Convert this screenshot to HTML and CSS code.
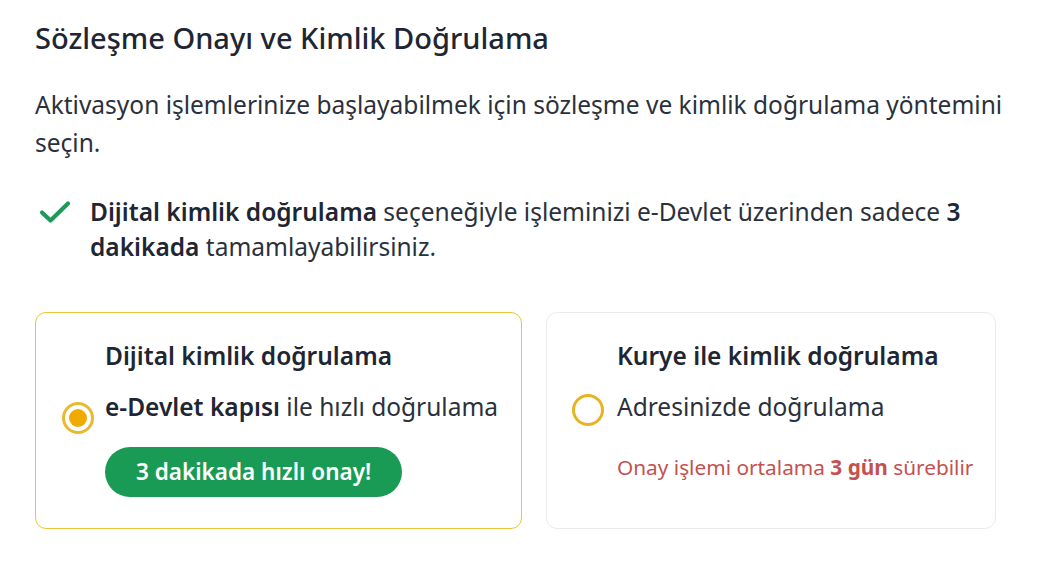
FILE: index.html
```html
<!DOCTYPE html>
<html lang="tr">
<head>
<meta charset="utf-8">
<link rel="stylesheet" href="styles.css">
</head>
<body>
<div class="page">
  <h1 class="title">Sözleşme Onayı ve Kimlik Doğrulama</h1>
  <p class="intro">Aktivasyon işlemlerinize başlayabilmek için sözleşme ve kimlik doğrulama yöntemini seçin.</p>
  <div class="note">
    <svg class="check" viewBox="0 0 32 24" width="32" height="24"><path d="M3 12.5 L11.5 20.5 L29 3.5" fill="none" stroke="#1e9a58" stroke-width="4.2" stroke-linecap="round" stroke-linejoin="round"/></svg>
    <p class="note-text"><strong>Dijital kimlik doğrulama</strong> seçeneğiyle işleminizi e-Devlet üzerinden sadece <strong>3 dakikada</strong> tamamlayabilirsiniz.</p>
  </div>
  <div class="cards">
    <div class="card card-selected">
      <div class="card-row">
        <span class="radio radio-on"><span class="dot"></span></span>
        <div class="card-body">
          <div class="card-title">Dijital kimlik doğrulama</div>
          <div class="card-sub"><strong>e-Devlet kapısı</strong> ile hızlı doğrulama</div>
          <span class="pill">3 dakikada hızlı onay!</span>
        </div>
      </div>
    </div>
    <div class="card card-plain">
      <div class="card-row">
        <span class="radio"></span>
        <div class="card-body">
          <div class="card-title">Kurye ile kimlik doğrulama</div>
          <div class="card-sub">Adresinizde doğrulama</div>
          <div class="warn">Onay işlemi ortalama <strong>3 gün</strong> sürebilir</div>
        </div>
      </div>
    </div>
  </div>
</div>
</body>
</html>
```
FILE: styles.css
```css
html, body { margin: 0; padding: 0; background: #fff; }
body { font-family: "Noto Sans", "Open Sans", sans-serif; color: #222a36; }
.page { padding: 19px 0 0 35px; width: 990px; }
.title { margin: 0; font-size: 29px; font-weight: 500; line-height: 38px; color: #1f2633; }
.intro { margin: 29px 0 0; font-size: 24.5px; line-height: 38px; color: #2a313c; }
.note { display: flex; align-items: flex-start; gap: 19px; margin-top: 32px; }
.check { flex: none; margin: 6px 0 0 4px; }
.note-text { margin: 0; font-size: 24.5px; line-height: 35px; color: #2a313c; }
.note-text strong, .card-sub strong { font-weight: 600; color: #1f2633; }
.cards { display: flex; gap: 24px; margin-top: 48px; }
.card { box-sizing: border-box; height: 217px; border-radius: 11px; padding: 26px 20px 0 26px; }
.card-selected { width: 487px; border: 1.5px solid #ecc43a; }
.card-plain { width: 450px; border: 1.5px solid #ebebed; padding-left: 25px; }
.card-row { display: flex; align-items: center; gap: 11px; }
.card-plain .card-row { gap: 13px; }
.card-body { display: flex; flex-direction: column; align-items: flex-start; }
.card-title { font-size: 24.5px; font-weight: 600; line-height: 34px; color: #1f2633; }
.card-sub { font-size: 24.5px; line-height: 34px; margin-top: 17px; color: #2a313c; }
.pill { margin-top: 23px; background: #1a9b55; color: #fff; font-size: 22.5px; font-weight: 600; border-radius: 25px; height: 50px; line-height: 50px; padding: 0 31px; }
.warn { margin-top: 29px; font-size: 20.8px; line-height: 28px; color: #c4514f; }
.warn strong { font-weight: 700; }
.radio { flex: none; box-sizing: border-box; width: 32px; height: 32px; border-radius: 50%; border: 3px solid #e6b422; display: flex; align-items: center; justify-content: center; }
.radio-on { border-color: #eab932; }
.dot { width: 18px; height: 18px; border-radius: 50%; background: #f0aa00; }
```
